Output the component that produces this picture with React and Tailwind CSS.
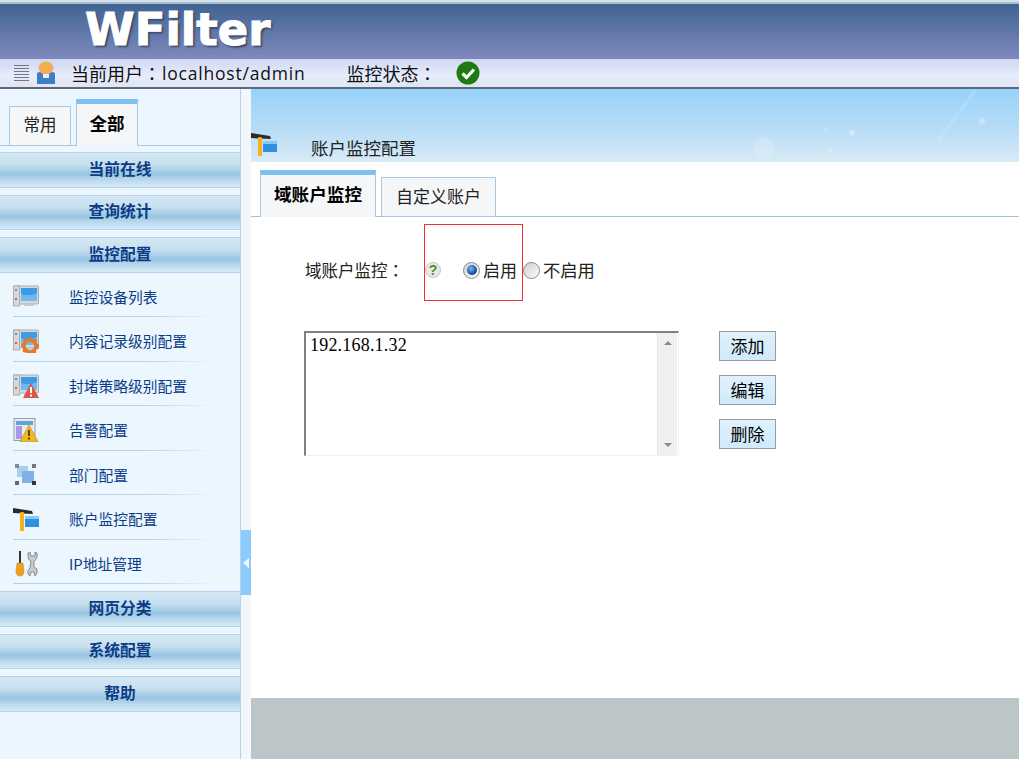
const cjk = "font-['Noto_Sans_CJK_SC','Noto_Sans',sans-serif]";
const fullColon = "font-['Noto_Sans_CJK_TC',sans-serif]";

const Monitor = ({ children }) => (
  <svg width="26" height="24" viewBox="0 0 26 24">
    <rect x="0.5" y="1" width="25" height="18" rx="1" fill="#d5d8dc" stroke="#a9adb2" />
    <rect x="0.5" y="1" width="6" height="20" fill="#d8d8d8" stroke="#a9adb2" />
    <rect x="2" y="4" width="2" height="2" fill="#3f9be8" />
    <rect x="2" y="13" width="2" height="2" fill="#d8574a" />
    <rect x="8" y="3" width="16" height="13" fill="#3d9be6" />
    <path d="M8 16 L8 9 Q16 12 24 8 L24 16 Z" fill="#6db9f2" />
    <rect x="11" y="19" width="10" height="2" fill="#c5c8cc" />
    {children}
  </svg>
);

const GearIcon = () => (
  <Monitor>
    <circle cx="17" cy="17" r="6" fill="none" stroke="#e27b2b" strokeWidth="3.5" />
    <circle cx="17" cy="17" r="8" fill="none" stroke="#e27b2b" strokeWidth="2" strokeDasharray="3 3" />
  </Monitor>
);

const AlertIcon = () => (
  <Monitor>
    <path d="M18 9 L26 24 L10 24 Z" fill="#d8574a" />
    <rect x="17" y="13" width="2" height="6" fill="#fff" />
    <rect x="17" y="20.5" width="2" height="2" fill="#fff" />
  </Monitor>
);

const WarnIcon = () => (
  <svg width="26" height="24" viewBox="0 0 26 24">
    <rect x="1" y="0.5" width="21" height="22" fill="#e8eaee" stroke="#9a9ea3" />
    <rect x="3" y="3" width="17" height="4" fill="#5ba5e0" />
    <rect x="3" y="8" width="6" height="13" fill="#a99ae6" />
    <path d="M16 7 L25 23.5 L7 23.5 Z" fill="#f2b91d" stroke="#b98a14" strokeWidth="0.6" />
    <rect x="15" y="12" width="2" height="6" fill="#5a430c" />
    <rect x="15" y="19.5" width="2" height="2" fill="#5a430c" />
  </svg>
);

const DeptIcon = () => (
  <svg width="24" height="24" viewBox="0 0 24 24">
    <rect x="3" y="3" width="11" height="11" fill="#a9cdf0" />
    <rect x="8" y="8" width="12" height="12" fill="#7fb0e6" />
    <rect x="1" y="1" width="4" height="4" fill="#8a8a8a" />
    <rect x="18" y="1" width="4" height="4" fill="#777" />
    <rect x="1" y="18" width="4" height="4" fill="#666" />
    <rect x="18" y="18" width="4" height="4" fill="#333" />
  </svg>
);

const AccountIcon = () => (
  <svg width="26" height="24" viewBox="0 0 26 24">
    <path d="M0 1 L19 4 L20 7 L0 6 Z" fill="#2b2b2b" />
    <rect x="7" y="5" width="4" height="19" rx="1" fill="#f5b120" />
    <path d="M12 9 L18 9 L20 11 L26 11 L26 20 L12 20 Z" fill="#2f8fe0" />
    <rect x="12" y="9" width="14" height="3" fill="#8cc6f2" />
  </svg>
);

const ToolIcon = () => (
  <svg width="26" height="26" viewBox="0 0 26 26">
    <rect x="6" y="0" width="2" height="12" fill="#333" />
    <path d="M4 12 L10 12 L11 20 Q11 25 7 25 Q3 25 3 20 Z" fill="#f0a020" stroke="#c87f10" strokeWidth="0.5" />
    <path d="M15 2 L15 6 Q15 9 18 10 L17 17 Q14 19 15 23 L17 25 L18 21 L21 21 L22 25 Q25 22 24 18 L21 16 L21 10 Q25 8 24 2 L22 1 L22 5 L18 5 L17 1 Z" fill="#c9cccf" stroke="#777" strokeWidth="0.8" />
  </svg>
);

const menuItems = [
  { label: "监控设备列表", icon: <Monitor /> },
  { label: "内容记录级别配置", icon: <GearIcon /> },
  { label: "封堵策略级别配置", icon: <AlertIcon /> },
  { label: "告警配置", icon: <WarnIcon /> },
  { label: "部门配置", icon: <DeptIcon /> },
  { label: "账户监控配置", icon: <AccountIcon /> },
  { label: "IP地址管理", icon: <ToolIcon /> },
];

const SectionHeader = ({ label }) => (
  <div className="h-[35.5px] pb-[2px] flex items-center justify-center border-y border-[#b4d3ef] bg-[linear-gradient(180deg,#d6e8f4_0%,#c5dfef_35%,#98c5e1_62%,#b7d8ec_78%,#d8eaf6_100%)] text-[15.75px] font-bold text-[#0c3c86]">
    {label}
  </div>
);

const Radio = ({ checked }) => (
  <span className="w-[17px] h-[17px] rounded-full border border-[#8a8a8a] bg-[linear-gradient(135deg,#cfcfcf,#fdfdfd)] flex items-center justify-center">
    {checked ? (
      <span className="w-[10px] h-[10px] rounded-full bg-[radial-gradient(circle_at_40%_35%,#7db8f2,#0a3f9a_70%)]" />
    ) : null}
  </span>
);

const ActionButton = ({ label }) => (
  <button className="w-[57px] h-[30px] pb-[1px] border border-[#9b9b9b] bg-[linear-gradient(180deg,#dff1fc,#cfeafc)] text-[17px] text-black">
    {label}
  </button>
);

const App = () => {
  return (
    <div className={`w-[1019px] h-[759px] overflow-hidden bg-white flex flex-col ${cjk}`}>
      <div className="h-[4px] shrink-0 border-t-2 border-[#d5e2ec] bg-[#a9bccd]" />
      <div className="h-[55px] shrink-0 pl-[85px] pb-[4px] bg-[linear-gradient(180deg,#3f6491,#8089bd)] flex items-center">
        <span className="font-['DejaVu_Sans',sans-serif] font-bold text-[45px] leading-none text-white [-webkit-text-stroke:1px_#fff] [text-shadow:2px_2px_2px_#36465f]">
          WFilter
        </span>
      </div>

      <div className="h-[30px] shrink-0 flex items-center border-b-2 border-[#5e6a7c] bg-[linear-gradient(180deg,#cfd8f3,#e6ecfb_60%,#dfe5f2)] text-[18px] text-[#111]">
        <div className="ml-[14px] w-[15px] h-[16px] bg-[repeating-linear-gradient(180deg,#777_0px,#777_1px,transparent_1px,transparent_3px)]" />
        <svg className="ml-[7px]" width="20" height="24" viewBox="0 0 20 24">
          <path d="M1 23 L1 13 Q1 11 4 11 L16 11 Q19 11 19 13 L19 23 Z" fill="#3d7fc4" />
          <ellipse cx="10" cy="7" rx="7.5" ry="6.5" fill="#f2ad55" />
          <rect x="7" y="13" width="6" height="4" fill="#e8eef6" />
        </svg>
        <span className="ml-[15px]">当前用户</span>
        <span className={`${fullColon} w-[19px]`}>：</span>
        <span className="font-['Open_Sans',sans-serif] text-[17.5px] tracking-[0.8px]">localhost/admin</span>
        <span className="ml-[41px] w-[109px]">
          监控状态<span className={fullColon}>：</span>
        </span>
        <svg width="24" height="24" viewBox="0 0 24 24">
          <circle cx="12" cy="12" r="11.5" fill="#1f7a12" />
          <path d="M6.5 12.5 L10.5 16.5 L18 8.5" fill="none" stroke="#fff" strokeWidth="3.2" />
        </svg>
      </div>

      <div className="flex-1 flex min-h-0">
        <aside className="w-[241px] shrink-0 border-r border-[#b4d3ef] bg-[#ebf6ff] flex flex-col">
          <div className="h-[57px] shrink-0 flex items-end gap-[5px] pl-[9px] border-b border-[#a9c7e2]">
            <div className="w-[62px] h-[40px] pb-[3px] -mb-px border border-[#a9c7e2] bg-[#f4f6f8] flex items-center justify-center text-[16.5px] text-[#222]">
              常用
            </div>
            <div className="w-[62px] h-[47px] pb-[4px] -mb-px border-x border-[#a9c7e2] border-t-[5px] border-t-[#7fc0f2] bg-[#f4f6f8] flex items-center justify-center text-[17.5px] font-bold text-black">
              全部
            </div>
          </div>
          <div className="flex flex-col gap-[7px] mt-[6px]">
            <SectionHeader label="当前在线" />
            <SectionHeader label="查询统计" />
            <div>
              <SectionHeader label="监控配置" />
              {menuItems.map((item) => (
                <div key={item.label} className="h-[44.5px] ml-[13px] mr-[26px] flex flex-col">
                  <div className="flex-1 pt-[5px] flex items-center">
                    <span className="w-[26px] flex justify-center">{item.icon}</span>
                    <span className="ml-[30px] text-[14.75px] text-[#0c3c86] whitespace-nowrap">{item.label}</span>
                  </div>
                  <div className="h-px bg-[linear-gradient(90deg,#b4d2e8,#b4d2e8_65%,#ebf6ff)]" />
                </div>
              ))}
            </div>
            <SectionHeader label="网页分类" />
            <SectionHeader label="系统配置" />
            <SectionHeader label="帮助" />
          </div>
        </aside>

        <div className="w-[10px] shrink-0 bg-[#f3f7fa] pt-[441px]">
          <div className="h-[65px] bg-[#8ccbfb] flex items-center justify-center">
            <div className="w-0 h-0 border-y-[5px] border-y-transparent border-r-[6px] border-r-[#eef7ff]" />
          </div>
        </div>

        <main className="flex-1 min-w-0 flex flex-col">
          <div className="relative h-[73px] shrink-0 bg-[linear-gradient(180deg,#98d2fa,#b7dcf6_55%,#d9ebf6)] flex items-end">
            <svg className="absolute inset-0 blur-[1px]" width="768" height="73" viewBox="0 0 768 73">
              <path d="M724 2 L687 52" stroke="#d3ebfb" strokeWidth="2" opacity="0.5" />
              <circle cx="513" cy="59" r="11" fill="#e8f3fa" opacity="0.3" />
              <circle cx="601" cy="44" r="3" fill="#f2f9fd" opacity="0.5" />
              <circle cx="575" cy="40" r="2" fill="#f2f9fd" opacity="0.4" />
              <circle cx="579" cy="61" r="2" fill="#f2f9fd" opacity="0.4" />
              <circle cx="731" cy="32" r="3" fill="#f2f9fd" opacity="0.5" />
            </svg>
            <div className="relative mb-[6px]">
              <AccountIcon />
            </div>
            <span className="relative ml-[34px] mb-[1px] text-[17.5px] leading-[26px] text-[#222]">账户监控配置</span>
          </div>

          <div className="h-[55px] shrink-0 flex items-end gap-[5px] pl-[9px] border-b border-[#9cc4d8]">
            <div className="w-[116px] h-[47px] pb-[4px] -mb-px border-x border-[#a9c7e2] border-t-[5px] border-t-[#7fc0f2] bg-[#f4f6f8] flex items-center justify-center text-[17.6px] font-bold text-black">
              域账户监控
            </div>
            <div className="w-[115px] h-[40px] pb-[2px] -mb-px border border-[#a9c7e2] bg-[#f4f6f8] flex items-center justify-center text-[17px] text-[#222]">
              自定义账户
            </div>
          </div>

          <div className="relative flex-1 min-h-0 flex flex-col">
            <div className="absolute left-[173px] top-[7px] w-[99px] h-[77px] border border-[#f03030]" />
            <div className="h-[46px] mt-[30px] pl-[54px] flex items-center text-[16.5px] text-[#222]">
              <span className="w-[120px]">
                域账户监控<span className={fullColon}>：</span>
              </span>
              <span className="w-[16px] h-[16px] rounded-full bg-[#e8e8e8] border border-[#c4c4c4] flex items-center justify-center font-['Liberation_Sans',sans-serif] text-[14px] font-bold leading-none text-[#4a9418]">
                ?
              </span>
              <span className="ml-[22px]"><Radio checked /></span>
              <span className="ml-[3px] text-[17px]">启用</span>
              <span className="ml-[6px]"><Radio /></span>
              <span className="ml-[3px] text-[17.3px]">不启用</span>
            </div>

            <div className="flex mt-[38px] pl-[53px]">
              <div className="w-[375px] h-[125px] border-t-2 border-l-2 border-[#808080] border-r border-b border-r-[#f0f0f0] border-b-[#f0f0f0] flex">
                <div className="flex-1 pl-[4px] font-['Liberation_Serif',serif] text-[18px] leading-[24px] tracking-[0.2px] text-black">
                  192.168.1.32
                </div>
                <div className="w-[20px] bg-[#f0f0f0] border-l border-[#e4e4e4] flex flex-col items-center justify-between py-[8px] mr-px">
                  <div className="w-0 h-0 border-x-[4px] border-x-transparent border-b-[4px] border-b-[#8a8a8a]" />
                  <div className="w-0 h-0 border-x-[4px] border-x-transparent border-t-[4px] border-t-[#8a8a8a]" />
                </div>
              </div>
              <div className="ml-[40px] flex flex-col gap-[14px]">
                <ActionButton label="添加" />
                <ActionButton label="编辑" />
                <ActionButton label="删除" />
              </div>
            </div>

            <div className="mt-auto h-[61px] bg-[#bcc5c7]" />
          </div>
        </main>
      </div>
    </div>
  );
};

export default App;
